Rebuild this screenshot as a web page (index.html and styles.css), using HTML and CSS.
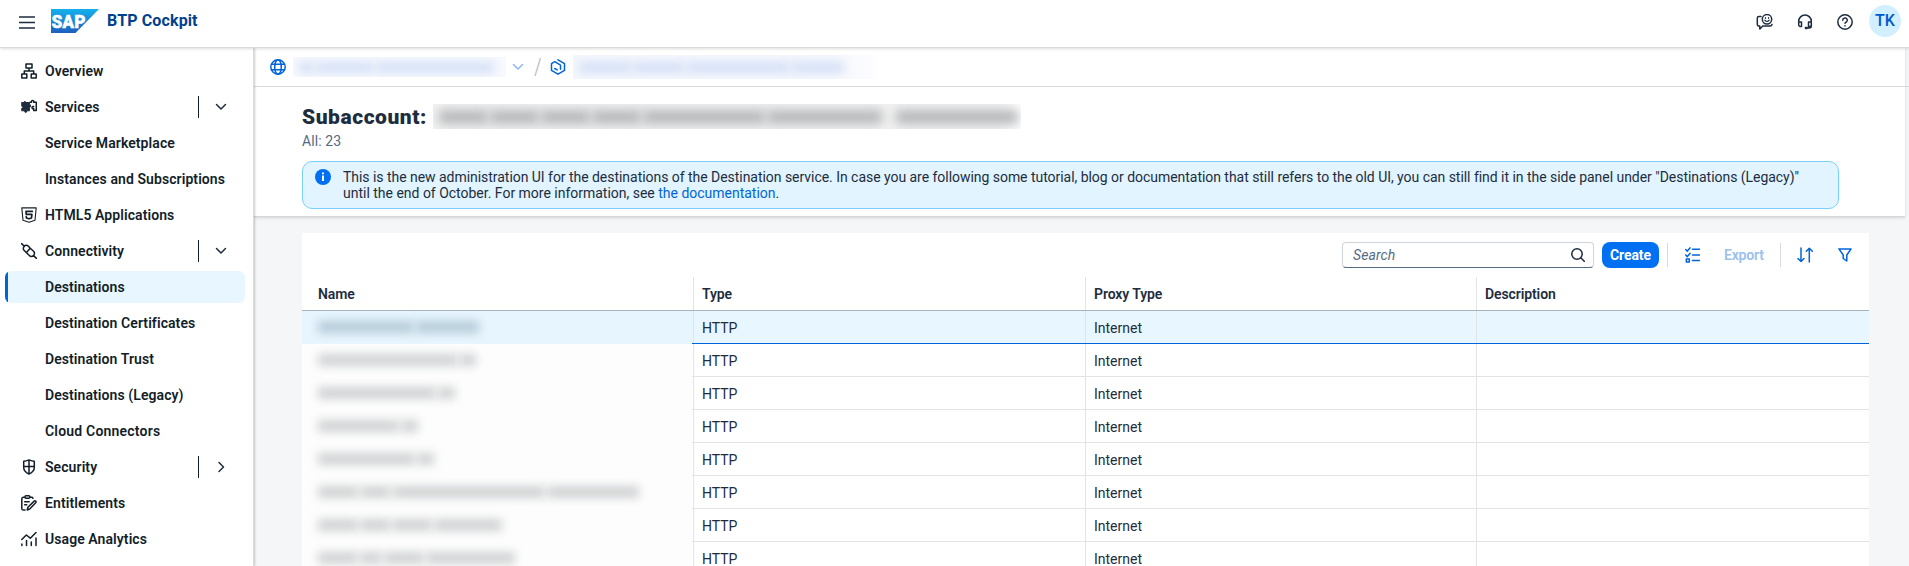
FILE: index.html
```html
<!DOCTYPE html>
<html lang="en">
<head>
<meta charset="utf-8">
<title>BTP Cockpit</title>
<link rel="stylesheet" href="styles.css">
</head>
<body>
<header class="shell">
  <svg class="menu" width="16" height="13" viewBox="0 0 16 13"><path d="M0 1h16M0 6.500h16M0 12h16"/></svg>
  <svg class="logo" width="48" height="24" viewBox="0 0 48 24">
    <defs><linearGradient id="sap" x1="0" y1="0" x2="0" y2="1"><stop offset="0" stop-color="#14b1ec"/><stop offset="1" stop-color="#1e5fbf"/></linearGradient></defs>
    <path d="M0 0h48L24.500 24H0z" fill="url(#sap)"/>
    <text x="0.500" y="18.500" textLength="34" lengthAdjust="spacingAndGlyphs">SAP</text>
  </svg>
  <h1>BTP Cockpit</h1>
  <nav class="tools">
    <svg class="ico" width="18" height="16" viewBox="0 0 18 16"><path d="M5 2.500H3A1.700 1.700 0 0 0 1.300 4.200v6.300A1.500 1.500 0 0 0 2.800 12h1v3l3-3H14a2 2 0 0 0 2-1.500"/><circle cx="11" cy="5.300" r="4.700"/><path class="fine" d="M8.800 6.200q2.200 2.600 4.400 0M9.500 3.700v.6M12.500 3.700v.6"/></svg>
    <svg class="ico" width="16" height="16" viewBox="0 0 16 16"><path d="M1.700 10V7.300a6.300 6.300 0 0 1 12.600 0V12a2 2 0 0 1-2 2H10M1.700 8h2.800v4.500H3.200a1.500 1.500 0 0 1-1.500-1.500zM14.300 8h-2.800v4.500h1.300a1.500 1.500 0 0 0 1.500-1.500zM8.500 13.500H10v1H8.500z"/></svg>
    <svg class="ico" width="16" height="16" viewBox="0 0 16 16"><circle cx="8" cy="8" r="7.200"/><path d="M5.700 6.300a2.300 2.300 0 1 1 3.400 2Q8 8.700 8 9.300M8 11.700v.3"/></svg>
    <span class="avatar">TK</span>
  </nav>
</header>
<div class="body">
  <aside class="side">
    <a class="item"><svg class="ico" width="16" height="16" viewBox="0 0 16 16"><path d="M5 .9h6v4H5zM.8 11.100h5v4h-5zM10.200 11.100h5v4h-5zM8 5v3M3.300 11V8h9.400v3"/></svg><span>Overview</span></a>
    <a class="item"><svg class="ico" width="16" height="16" viewBox="0 0 16 16"><path class="solid" d="M.7 3.500h2q0-.9 1.100-.9t1.200.9h3.500v2q1.200 0 1.200 1.400T8.500 8.300v3.500H5.700q.3 1.700-1 1.700t-1-1.700h-3V9.300q1.200 0 1.200-1.100T.7 7z"/><path d="M9 3.200h1.500q-.3-1.800 1.100-1.800t1.100 1.800h2.600v8.300h-2.600V9.600q-1.700.3-1.700-1T12.700 7.500"/></svg><span>Services</span><i class="bar"></i><svg class="chev" width="12" height="8" viewBox="0 0 12 8"><path d="M1.500 1.500L6 6l4.500-4.500"/></svg></a>
    <a class="item sub"><span>Service Marketplace</span></a>
    <a class="item sub"><span>Instances and Subscriptions</span></a>
    <a class="item"><svg class="ico thin" width="16" height="16" viewBox="0 0 16 16"><path d="M.8.900h14.400L14 13.200l-6 2.100-6-2.100z"/><path class="bold" d="M11.300 4.400H5l.2 3h5.700l-.4 3.600-2.500.8-2.600-.8-.1-1.300"/></svg><span>HTML5 Applications</span></a>
    <a class="item"><svg class="ico" width="16" height="16" viewBox="0 0 16 16"><path d="M.6.600L3.300 3.300M12.500 12.500l2.900 2.900M3 7.200a2.700 2.700 0 0 1 .3-3.900 2.700 2.700 0 0 1 3.900-.2L9 5M3 7.200l5.300 5.300a2.800 2.800 0 0 0 4.200 0 2.800 2.800 0 0 0 .3-4L9 5M5.700 9.300L9 5.500"/></svg><span>Connectivity</span><i class="bar"></i><svg class="chev" width="12" height="8" viewBox="0 0 12 8"><path d="M1.500 1.500L6 6l4.500-4.500"/></svg></a>
    <a class="item sub on"><span>Destinations</span></a>
    <a class="item sub"><span>Destination Certificates</span></a>
    <a class="item sub"><span>Destination Trust</span></a>
    <a class="item sub"><span>Destinations (Legacy)</span></a>
    <a class="item sub wide"><span>Cloud Connectors</span></a>
    <a class="item"><svg class="ico" width="16" height="16" viewBox="0 0 16 16"><path d="M8 .9q3 1.300 5.300 1.300v6.300q0 4-5.300 6.600-5.300-2.600-5.300-6.600V2.200Q5 2.200 8 .9zM8 1v14M2.700 7.600h10.600"/></svg><span>Security</span><i class="bar"></i><svg class="chev" width="12" height="12" viewBox="0 0 12 12"><path d="M4 1.500L8.500 6 4 10.500"/></svg></a>
    <a class="item"><svg class="ico" width="16" height="16" viewBox="0 0 16 16"><path d="M3.500 2.300h-1A1.700 1.700 0 0 0 .8 4v9.400a1.700 1.700 0 0 0 1.700 1.700H4M9.500 2.300h1q1 0 1.500 1M4 1.800q0-1 1-1h2.800q1 0 1 1v.5q0 1-1 1H5q-1 0-1-1zM3.700 6.700h4.500M3.700 9.700h2M6.200 15l.7-2.700 6.300-6.200q.8-.6 1.500 0t0 1.700L8.700 14z"/></svg><span>Entitlements</span></a>
    <a class="item"><svg class="ico" width="16" height="16" viewBox="0 0 16 16"><path d="M.8 8.500L5.300 4l4 3.200L15 1.500M.9 13v1.500M5.500 9.500v5M10.300 11v3.500M15 7v7.500"/></svg><span>Usage Analytics</span></a>
  </aside>
  <main class="main">
    <section class="top">
      <div class="crumbs">
        <svg class="ico blue" width="16" height="16" viewBox="0 0 16 16"><circle cx="8" cy="8" r="7.200"/><ellipse cx="8" cy="8" rx="3.300" ry="7.200"/><path d="M1.500 5.300h13M1.500 10.700h13"/></svg>
        <span class="veil v1"><i></i><i></i><i></i></span>
        <svg class="chev light" width="12" height="8" viewBox="0 0 12 8"><path d="M1.500 1.500L6 6l4.500-4.500"/></svg>
        <svg class="slash" width="8" height="20" viewBox="0 0 8 20"><path d="M1 19L6.500 1"/></svg>
        <svg class="ico blue" width="16" height="16" viewBox="0 0 16 16"><path d="M4.800 2.700L1.500 4.600v6.800L8 15.200l6.500-3.800V4.600L8 .8M4.800 2.700l5.700 3.400v4.200M4.700 9.500l2.500 1.400"/></svg>
        <span class="veil v2"><i></i><i></i><i></i><i></i></span>
      </div>
      <div class="head">
        <div class="title"><h2>Subaccount:</h2><span class="veil v3"><i></i><i></i><i></i><i></i><i></i><i></i><i></i></span></div>
        <p class="count">All: 23</p>
        <div class="strip">
          <svg width="16" height="16" viewBox="0 0 16 16"><circle cx="8" cy="8" r="8" fill="#0070f2"/><path d="M7 3.500h2v1.800H7zM7 6.500h2V12H7z" fill="#fff"/></svg>
          <p><span class="l1">This is the new administration UI for the destinations of the Destination service. In case you are following some tutorial, blog or documentation that still refers to the old UI, you can still find it in the side panel under "Destinations (Legacy)"</span><br><span class="l2">until the end of October. For more information, see <a>the documentation</a>.</span></p>
        </div>
      </div>
    </section>
    <section class="card">
      <div class="bar-top">
        <div class="search"><span>Search</span><svg class="ico" width="14" height="14" viewBox="0 0 14 14"><circle cx="6" cy="6" r="5.200"/><path d="M9.800 9.800l3.700 3.700"/></svg></div>
        <button class="create">Create</button>
        <i class="sep s1"></i>
        <svg class="ico blue i1" width="15" height="16" viewBox="0 0 15 16"><path d="M.7 2.500l1.600 1.600L5 .9M.7 8l1.600 1.600L5 6.400M1.300 11.900h3v3h-3zM7.500 2.200h7M7.500 8h7M7.500 13.500h7"/></svg>
        <span class="export">Export</span>
        <i class="sep s2"></i>
        <svg class="ico blue i2" width="16" height="16" viewBox="0 0 16 16"><path d="M4 1v13.500M1 11.500l3 3 3-3M12.300 15V1.200M9.300 4.200l3-3 3 3"/></svg>
        <svg class="ico blue i3" width="14" height="14" viewBox="0 0 14 14"><path d="M.9.900h12.200L8.800 7v6L5.200 10.500V7z"/></svg>
      </div>
      <div class="grid hd"><b>Name</b><b>Type</b><b>Proxy Type</b><b>Description</b></div>
      <div class="grid hot"><span class="nm"><i style="width:96px"></i><i style="width:63px"></i></span><span>HTTP</span><span>Internet</span><span></span></div>
      <div class="grid"><span class="nm"><i style="width:140px"></i><i style="width:16px"></i></span><span>HTTP</span><span>Internet</span><span></span></div>
      <div class="grid"><span class="nm"><i style="width:118px"></i><i style="width:17px"></i></span><span>HTTP</span><span>Internet</span><span></span></div>
      <div class="grid"><span class="nm"><i style="width:81px"></i><i style="width:17px"></i></span><span>HTTP</span><span>Internet</span><span></span></div>
      <div class="grid"><span class="nm"><i style="width:97px"></i><i style="width:17px"></i></span><span>HTTP</span><span>Internet</span><span></span></div>
      <div class="grid"><span class="nm"><i style="width:40px"></i><i style="width:30px"></i><i style="width:153px"></i><i style="width:92px"></i></span><span>HTTP</span><span>Internet</span><span></span></div>
      <div class="grid"><span class="nm"><i style="width:40px"></i><i style="width:30px"></i><i style="width:40px"></i><i style="width:68px"></i></span><span>HTTP</span><span>Internet</span><span></span></div>
      <div class="grid"><span class="nm"><i style="width:40px"></i><i style="width:22px"></i><i style="width:40px"></i><i style="width:89px"></i></span><span>HTTP</span><span>Internet</span><span></span></div>
    </section>
  </main>
</div>
</body>
</html>
```
FILE: styles.css
```css
* { box-sizing: border-box; }
body { margin: 0; width: 1909px; height: 566px; overflow: hidden; display: flex; flex-direction: column; background: #f5f6f7; color: #1d2d3e; font: 14px/16px Roboto, "Liberation Sans", sans-serif; }
h1, h2, p { margin: 0; }
svg { flex: none; display: block; }
.ico, .chev, .menu { fill: none; stroke: #1d2d3e; stroke-width: 1.5; stroke-linejoin: round; stroke-linecap: round; }
.ico.blue { stroke: #0064d9; }
.solid { fill: #1d2d3e; stroke-width: .8; }
.ico.thin { stroke-width: 1.1; }
.bold { stroke-width: 1.7; }
.fine { stroke-width: 1.2; }

.shell { height: 48px; flex: none; display: flex; align-items: center; padding: 0 8px 5px 19px; background: #fff; border-bottom: 1px solid #d9dbdd; box-shadow: 0 1px 3px #0002; position: relative; z-index: 2; }
.menu { margin: 2px 16px 0 0; stroke-linecap: butt; stroke-width: 1.6; }
.logo text { fill: #fff; stroke: #fff; stroke-width: .4; font: 900 18px Roboto, "Liberation Sans", sans-serif; }
.shell h1 { margin-left: 8px; font-size: 16px; font-weight: 700; color: #00418e; letter-spacing: .13px; }
.tools { margin-left: auto; display: flex; align-items: center; }
.tools .ico { margin: 2px 24px 0 0; }
.tools .ico:first-child { margin-right: 23px; }
.tools .ico:nth-child(3) { margin-right: 16px; }
.avatar { width: 32px; height: 32px; border-radius: 50%; background: #d1efff; color: #0057d2; font-size: 16px; font-weight: 500; line-height: 32px; text-align: center; }

.body { display: flex; flex: 1; min-height: 0; }
.side { width: 254px; flex: none; padding: 7px 8px 0 5px; background: #fff; border-right: 1px solid #d9dbdd; box-shadow: 1px 0 2px #0003; display: flex; flex-direction: column; gap: 4px; position: relative; z-index: 1; }
.item { height: 32px; flex: none; display: flex; align-items: center; padding-left: 16px; font-weight: 600; color: #131e29; letter-spacing: .08px; }
.item > .ico { width: 16px; margin-right: 8px; stroke: #131e29; }
.item.sub { padding-left: 40px; }
.item.wide { letter-spacing: .2px; }
.item.on { background: linear-gradient(90deg, #0064d9 3px, #e8f7ff 3px); border-radius: 6px; }
.item .bar { width: 1px; height: 22px; background: #131e29; margin-left: auto; margin-right: 16px; }
.item .chev { margin-right: 18px; }

.main { flex: 1; min-width: 0; }
.top { height: 169px; width: 1651px; background: #fff; border-bottom: 1px solid #d4d6d8; box-shadow: 0 1px 3px #0002; }
.crumbs { height: 39px; display: flex; align-items: center; padding-left: 16px; border-bottom: 1px solid #d9d9d9; width: 1655px; }
.veil { display: flex; align-items: center; overflow: hidden; height: 20px; padding: 0 6px; gap: 2px; }
.veil i { height: 11px; filter: blur(5px); }
.v1 { width: 213px; margin-left: 7px; background: #f7f9fe; padding-right: 12px; }
.v2 { width: 303px; height: 24px; margin-left: 7px; background: linear-gradient(90deg, #f5f7fd 85%, #fdfdff); padding-right: 32px; }
.v1 i, .v2 i { background: #d5e0f6; flex: 2; }
.v1 i:first-child { flex: .5; }
.v1 i:last-child { flex: 4; }
.v2 i:nth-child(3) { flex: 4; }
.chev.light { margin-left: 6px; stroke: #8ab9ef; }
.slash { margin: 0 8px 0 10px; fill: none; stroke: #c7c9cb; stroke-width: 1.6; }
.head { padding: 17px 66px 0 48px; }
.title { display: flex; align-items: center; height: 25px; }
h2 { font-size: 21px; font-weight: 900; line-height: 24px; width: 127px; white-space: nowrap; letter-spacing: .55px; }
.v3 { width: 588px; height: 25px; margin-left: 4px; background: linear-gradient(90deg, #f2f2f2 0 96%, #fff); padding-right: 3px; }
.v3 i { height: 14px; background: #b4b7b9; filter: blur(5.500px); flex: 3; }
.v3 i:nth-child(5) { flex: 7.500; }
.v3 i:nth-child(6) { flex: 7; margin-right: 12px; }
.v3 i:nth-child(7) { flex: 7.500; }
.count { margin-top: 4px; color: #556b82; letter-spacing: .1px; }
.strip { margin-top: 12px; height: 48px; width: 1537px; display: flex; gap: 12px; padding: 7px 12px; background: #e1f4ff; border: 1px solid #7bcfff; border-radius: 10px; }
.strip p { white-space: nowrap; }
.l1 { letter-spacing: -.038px; }
.l2 { letter-spacing: -.01px; }
.strip a { color: #0064d9; }

.card { width: 1567px; height: 340px; margin: 16px 0 0 48px; background: #fff; overflow: hidden; }
.bar-top { height: 44px; padding: 9px 17px 9px 0; display: flex; justify-content: flex-end; align-items: center; }
.search { width: 252px; height: 26px; display: flex; justify-content: space-between; align-items: center; border: 1px solid #cfd5dc; border-bottom-color: #556b82; border-radius: 4px; padding: 0 8px 0 10px; color: #556b82; font-style: italic; letter-spacing: .1px; }
.create { width: 57px; height: 26px; margin: 0 8px; padding: 0; border: 0; border-radius: 8px; background: #0070f2; color: #fff; font: 700 14px Roboto, "Liberation Sans", sans-serif; letter-spacing: -.1px; }
.sep { width: 1px; height: 24px; background: #d9d9d9; }
.i1 { margin: 0 24px 0 17px; }
.export { width: 41px; color: #99c1f0; font-weight: 600; letter-spacing: -.2px; margin-right: 15px; }
.i2 { margin: 0 25px 0 16px; }
.grid { display: grid; grid-template-columns: 392px 392px 391px 392px; height: 33px; border-bottom: 1px solid #e2e3e4; }
.grid > * { border-right: 1px solid #e2e3e4; padding: 9px 0 0 8px; }
.grid > :first-child { padding-left: 16px; }
.grid > :last-child { border-right: 0; }
.hd { height: 34px; border-bottom-color: #a8b3bd; }
.hd b { font-weight: 600; padding-top: 9px; letter-spacing: -.1px; }
.hot { background: #e8f7ff; border-bottom-color: #0064d9; }
.grid > .nm { display: flex; gap: 2px; margin: 0 2px -1px 0; background: #fdfdfd; border-right: 0; }
.grid > .nm + span { box-shadow: -1px 0 #e2e3e4; }
.nm i { height: 12px; margin-top: 1px; background: #d0d2d3; filter: blur(5px); }
.grid.hot > .nm { background: #e7f5fe; }
.hot .nm i { background: #b5cbd8; }
```
